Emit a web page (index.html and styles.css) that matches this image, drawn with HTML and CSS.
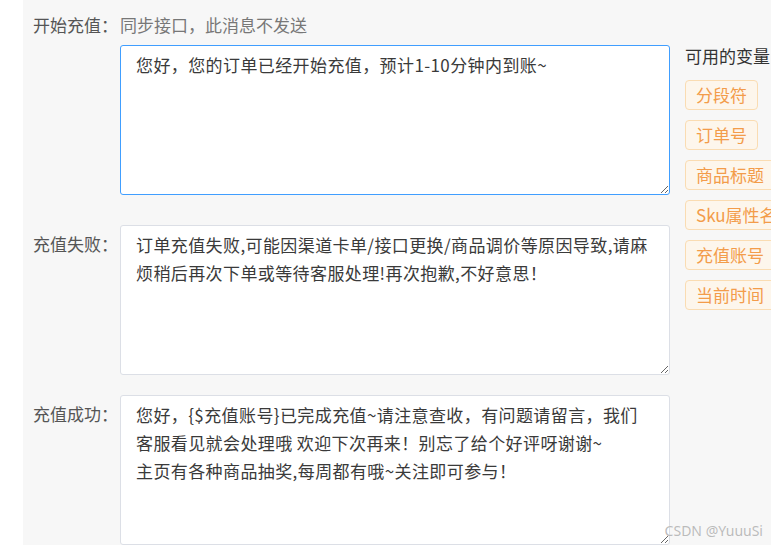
FILE: index.html
```html
<!DOCTYPE html>
<html>
<head>
  <meta charset="UTF-8">
  <title>消息模板</title>
  <link rel="stylesheet" href="styles.css">
</head>
<body>
  <div class="page">
    <div class="head">
      <span class="head-label">开始充值：</span><span class="hint">同步接口，此消息不发送</span>
    </div>
    <div class="main">
      <div class="form">
        <div class="row">
          <span class="label"></span>
          <textarea class="msg active">您好，您的订单已经开始充值，预计1-10分钟内到账~</textarea>
        </div>
        <div class="row row-tight">
          <span class="label">充值失败：</span>
          <textarea class="msg">订单充值失败,可能因渠道卡单/接口更换/商品调价等原因导致,请麻烦稍后再次下单或等待客服处理!再次抱歉,不好意思！</textarea>
        </div>
        <div class="row row-last">
          <span class="label">充值成功：</span>
          <textarea class="msg">您好，{$充值账号}已完成充值~请注意查收，有问题请留言，我们客服看见就会处理哦 欢迎下次再来！别忘了给个好评呀谢谢~
主页有各种商品抽奖,每周都有哦~关注即可参与！</textarea>
        </div>
      </div>
      <div class="vars">
        <p class="vars-title">可用的变量</p>
        <span class="tag">分段符</span>
        <span class="tag">订单号</span>
        <span class="tag">商品标题</span>
        <span class="tag">Sku属性名</span>
        <span class="tag">充值账号</span>
        <span class="tag">当前时间</span>
      </div>
    </div>
  </div>
  <div class="mark">CSDN @YuuuSi</div>
</body>
</html>
```

FILE: styles.css
```css
body {
  margin: 0;
  padding: 0;
  overflow: hidden;
  background-color: #fff;
  height: 545px;
  font-family: "Noto Sans CJK SC", "Noto Sans", sans-serif;
  font-size: 17px;
  color: #555;
}

.page {
  margin-left: 23px;
  background-color: #f7f7f7;
  padding: 15px 0 0 10px;
  height: 100%;
  box-sizing: border-box;
}

.head {
  height: 20px;
  line-height: 20px;
  margin-bottom: 10px;
  white-space: nowrap;
}

.head-label {
  display: inline-block;
  width: 87px;
  color: #555;
}

.hint {
  color: #777;
}

.main {
  display: flex;
  gap: 15px;
}

.row {
  display: flex;
  margin-bottom: 30px;
}

.row-tight {
  margin-bottom: 20px;
}

.row-last {
  margin-bottom: 0;
}

.label {
  width: 87px;
  flex-shrink: 0;
  color: #555;
  line-height: 28px;
  padding-top: 5px;
}

.msg {
  box-sizing: border-box;
  width: 550px;
  height: 150px;
  padding: 5px 15px;
  font-family: "Noto Sans CJK SC", "Noto Sans", sans-serif;
  font-size: 17px;
  letter-spacing: 0.4px;
  line-height: 28px;
  color: #3a3a3a;
  background-color: #fff;
  border: 1px solid #dcdfe6;
  border-radius: 3px;
  outline: none;
  resize: vertical;
}

.msg.active {
  border-color: #409eff;
}

.vars {
  white-space: nowrap;
}

.vars-title {
  margin: 0 0 13px 0;
  line-height: 22px;
  color: #333;
}

.tag {
  display: table;
  height: 30px;
  line-height: 28px;
  padding: 0 10px;
  margin-bottom: 10px;
  box-sizing: border-box;
  color: #f39c4a;
  background-color: #fdf6ec;
  border: 1px solid #fadcb2;
  border-radius: 4px;
}

.mark {
  position: absolute;
  right: 8px;
  bottom: 5px;
  font-family: "Noto Sans", sans-serif;
  font-size: 14px;
  color: #bbb;
  text-shadow: 0 0 1px #fff;
}
```
